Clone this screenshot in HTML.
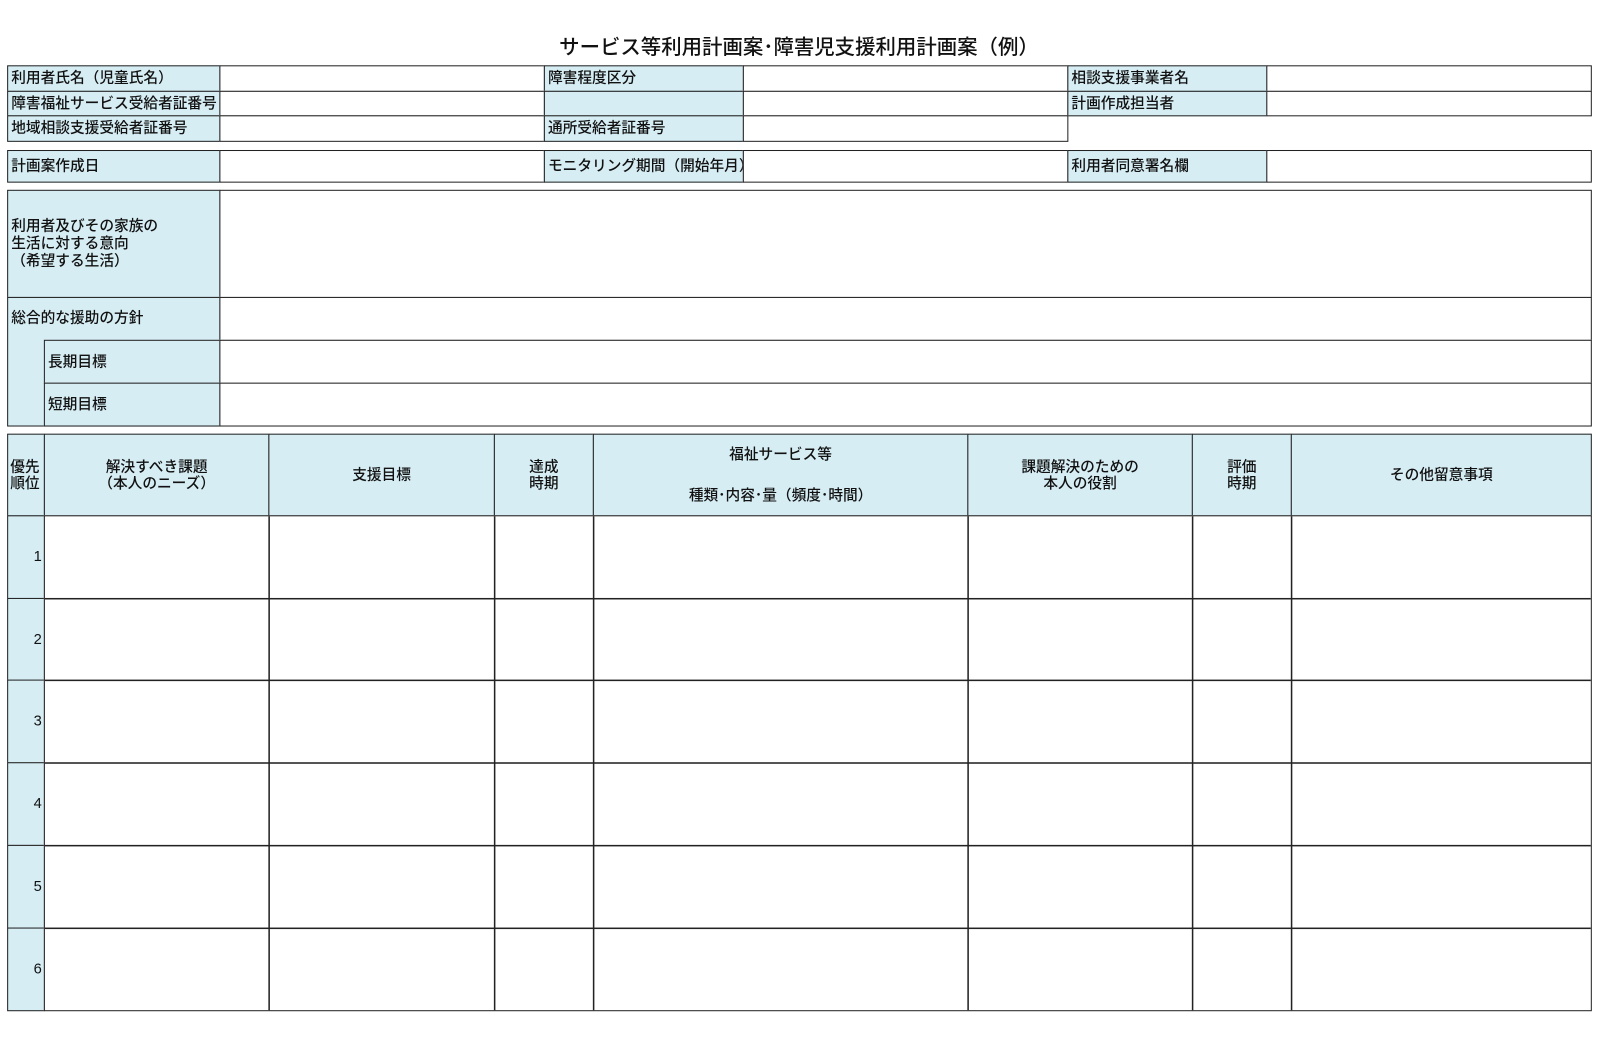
<!DOCTYPE html>
<html><head><meta charset="utf-8"><style>
body{margin:0;width:1600px;height:1020px;background:#fff;position:relative;font-family:"Liberation Sans","Noto Sans CJK JP",sans-serif;color:#111;overflow:hidden}
#w{position:absolute;left:0;top:0;width:1600px;height:1020px;transform:scale(1.0204);transform-origin:0 0}
.c{position:absolute;border:1.5px solid #222;box-sizing:border-box;font-size:14.4px;font-weight:500;line-height:16px;display:flex;align-items:center;padding-left:3px;white-space:nowrap;background:#fff}
.b{background:#d6edf4}
.m{justify-content:center;text-align:center;padding-left:0}
.n{justify-content:flex-end;padding-right:2px}
.t{position:absolute;left:0;width:1566px;top:30px;text-align:center;font-size:20px;font-weight:500;color:#111}
</style></head><body><div id="w">
<div class="t">サービス等利用計画案･障害児支援利用計画案（例）</div>

<div class="c b" style="left:7px;top:64px;width:209px;height:26px">利用者氏名（児童氏名）</div>
<div class="c" style="left:215px;top:64px;width:319px;height:26px"></div>
<div class="c b" style="left:533px;top:64px;width:196px;height:26px">障害程度区分</div>
<div class="c" style="left:728px;top:64px;width:319px;height:26px"></div>
<div class="c b" style="left:1046px;top:64px;width:196px;height:26px">相談支援事業者名</div>
<div class="c" style="left:1241px;top:64px;width:319px;height:26px"></div>

<div class="c b" style="left:7px;top:89px;width:209px;height:25px">障害福祉サービス受給者証番号</div>
<div class="c" style="left:215px;top:89px;width:319px;height:25px"></div>
<div class="c b" style="left:533px;top:89px;width:196px;height:25px"></div>
<div class="c" style="left:728px;top:89px;width:319px;height:25px"></div>
<div class="c b" style="left:1046px;top:89px;width:196px;height:25px">計画作成担当者</div>
<div class="c" style="left:1241px;top:89px;width:319px;height:25px"></div>

<div class="c b" style="left:7px;top:113px;width:209px;height:26px">地域相談支援受給者証番号</div>
<div class="c" style="left:215px;top:113px;width:319px;height:26px"></div>
<div class="c b" style="left:533px;top:113px;width:196px;height:26px">通所受給者証番号</div>
<div class="c" style="left:728px;top:113px;width:319px;height:26px"></div>

<div class="c b" style="left:7px;top:147px;width:209px;height:32px">計画案作成日</div>
<div class="c" style="left:215px;top:147px;width:319px;height:32px"></div>
<div class="c b" style="left:533px;top:147px;width:196px;height:32px">モニタリング期間（開始年月）</div>
<div class="c" style="left:728px;top:147px;width:319px;height:32px"></div>
<div class="c b" style="left:1046px;top:147px;width:196px;height:32px">利用者同意署名欄</div>
<div class="c" style="left:1241px;top:147px;width:319px;height:32px"></div>

<div class="c b" style="left:7px;top:186px;width:209px;height:106px;line-height:17px">利用者及びその家族の<br>生活に対する意向<br>（希望する生活）</div>
<div class="c" style="left:215px;top:186px;width:1345px;height:106px"></div>
<div class="c b" style="left:7px;top:291px;width:209px;height:127px;align-items:flex-start;padding-top:12px">総合的な援助の方針</div>
<div class="c" style="left:215px;top:291px;width:1345px;height:43px"></div>
<div class="c b" style="left:43px;top:333px;width:173px;height:43px">長期目標</div>
<div class="c" style="left:215px;top:333px;width:1345px;height:43px"></div>
<div class="c b" style="left:43px;top:375px;width:173px;height:43px">短期目標</div>
<div class="c" style="left:215px;top:375px;width:1345px;height:43px"></div>

<div class="c b" style="left:7px;top:425px;width:37px;height:81px;padding-left:2px">優先<br>順位</div>
<div class="c b m" style="left:43px;top:425px;width:221px;height:81px">解決すべき課題<br>（本人のニーズ）</div>
<div class="c b m" style="left:263px;top:425px;width:222px;height:81px">支援目標</div>
<div class="c b m" style="left:484px;top:425px;width:98px;height:81px">達成<br>時期</div>
<div class="c b m" style="left:581px;top:425px;width:368px;height:81px;line-height:20px">福祉サービス等<br><br>種類･内容･量（頻度･時間）</div>
<div class="c b m" style="left:948px;top:425px;width:221px;height:81px">課題解決のための<br>本人の役割</div>
<div class="c b m" style="left:1168px;top:425px;width:98px;height:81px">評価<br>時期</div>
<div class="c b m" style="left:1265px;top:425px;width:295px;height:81px">その他留意事項</div>

<div style="position:absolute;left:0;top:505px">
<div class="c b n" style="left:7px;top:0;width:37px;height:82px">1</div>
<div class="c b n" style="left:7px;top:81px;width:37px;height:82px">2</div>
<div class="c b n" style="left:7px;top:161px;width:37px;height:82px">3</div>
<div class="c b n" style="left:7px;top:242px;width:37px;height:82px">4</div>
<div class="c b n" style="left:7px;top:323px;width:37px;height:82px">5</div>
<div class="c b n" style="left:7px;top:404px;width:37px;height:82px">6</div>
</div>
<div style="position:absolute;left:43px;top:505px;width:1517px;height:486px;border:1.5px solid #222;box-sizing:border-box;
background:
linear-gradient(#222,#222) 0 79.5px/100% 1.5px no-repeat,
linear-gradient(#222,#222) 0 160px/100% 1.5px no-repeat,
linear-gradient(#222,#222) 0 241px/100% 1.5px no-repeat,
linear-gradient(#222,#222) 0 321.5px/100% 1.5px no-repeat,
linear-gradient(#222,#222) 0 402.5px/100% 1.5px no-repeat,
linear-gradient(#222,#222) 219px 0/1.5px 100% no-repeat,
linear-gradient(#222,#222) 440px 0/1.5px 100% no-repeat,
linear-gradient(#222,#222) 537px 0/1.5px 100% no-repeat,
linear-gradient(#222,#222) 904px 0/1.5px 100% no-repeat,
linear-gradient(#222,#222) 1124px 0/1.5px 100% no-repeat,
linear-gradient(#222,#222) 1221px 0/1.5px 100% no-repeat,#fff"></div>
</div></body></html>
